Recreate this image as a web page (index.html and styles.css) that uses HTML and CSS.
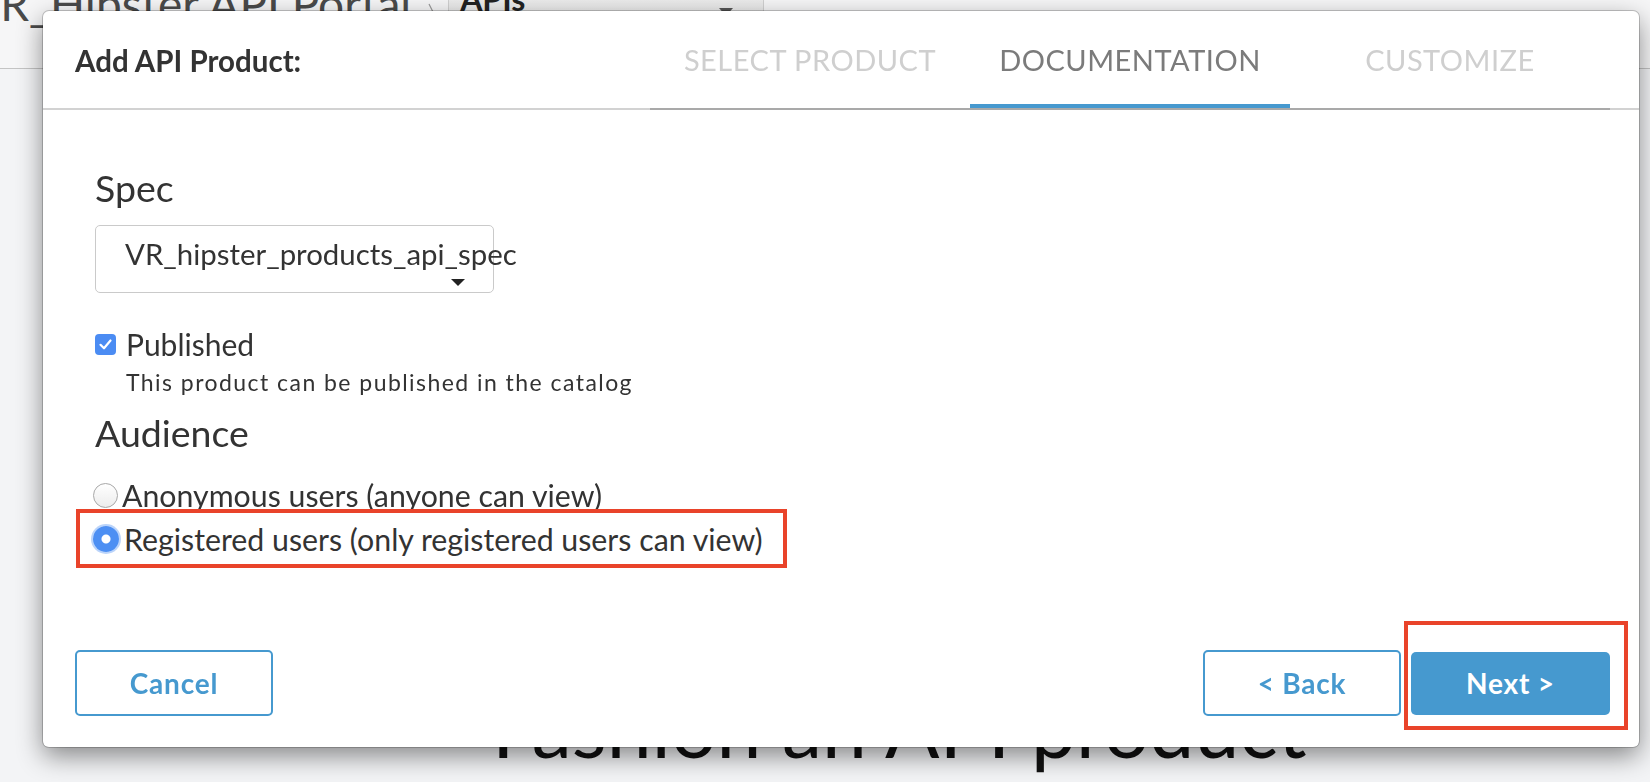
FILE: index.html
```html
<!DOCTYPE html>
<html lang="en">
<head>
<meta charset="utf-8">
<title>Add API Product</title>
<link rel="stylesheet" href="styles.css">
</head>
<body>
<div class="page">
  <header class="topbar">
    <div class="portal-title">VR_Hipster API Portal</div>
    <svg class="crumb-sep" width="14" height="44" viewBox="0 0 14 44"><path d="M2 2 L12 22 L2 42" fill="none" stroke="#9a9a9a" stroke-width="1.2"/></svg>
    <div class="crumb-select">
      <span class="crumb-label">APIs</span>
      <svg class="crumb-caret" width="14" height="8" viewBox="0 0 14 8"><path d="M0 0 H14 L7 8 Z" fill="#555"/></svg>
    </div>
  </header>
  <main class="page-main">
    <h1 class="page-heading">Fashion an API product</h1>
  </main>
</div>

<div class="modal">
  <div class="modal-header">
    <div class="modal-title">Add API Product:</div>
    <nav class="tabs">
      <div class="tab">SELECT PRODUCT</div>
      <div class="tab active">DOCUMENTATION</div>
      <div class="tab">CUSTOMIZE</div>
    </nav>
  </div>

  <div class="modal-body">
    <h2 class="section-title">Spec</h2>
    <div class="select">
      <span class="select-value">VR_hipster_products_api_spec</span>
      <svg class="select-caret" width="14" height="7" viewBox="0 0 14 7"><path d="M0 0 H14 L7 7 Z" fill="#222"/></svg>
    </div>

    <div class="check-row">
      <span class="checkbox"><svg width="21" height="21" viewBox="0 0 21 21"><path d="M5.5 10.8 L9 14.3 L15.5 6.5" fill="none" stroke="#fff" stroke-width="2.2" stroke-linecap="round" stroke-linejoin="round"/></svg></span>
      <span class="check-label">Published</span>
    </div>
    <p class="hint">This product can be published in the catalog</p>

    <h2 class="section-title audience">Audience</h2>
    <div class="radio-row">
      <span class="radio"></span>
      <span class="radio-label">Anonymous users (anyone can view)</span>
    </div>
    <div class="radio-row highlighted">
      <span class="radio checked"></span>
      <span class="radio-label">Registered users (only registered users can view)</span>
    </div>
  </div>

  <div class="modal-footer">
    <button class="btn btn-outline">Cancel</button>
    <div class="footer-right">
      <button class="btn btn-outline">&lt; Back</button>
      <div class="next-wrap">
        <button class="btn btn-primary">Next &gt;</button>
        <span class="annotation"></span>
      </div>
    </div>
  </div>
</div>
</body>
</html>
```

FILE: styles.css
```css
* { box-sizing: border-box; }

html, body {
  margin: 0;
  padding: 0;
  height: 100%;
  overflow: hidden;
}

body {
  font-family: Lato, "Open Sans", "Liberation Sans", sans-serif;
  color: #333;
  background: #f3f4f6;
}

/* ---------- background page ---------- */
.page {
  height: 100vh;
  display: flex;
  flex-direction: column;
}

.topbar {
  margin-top: -24px;
  height: 93px;
  flex: none;
  display: flex;
  align-items: flex-start;
  border-bottom: 1px solid #c4c4c4;
  background: #f6f6f7;
}

.portal-title {
  margin-left: -31px;
  font-size: 46px;
  line-height: 55px;
  color: #4a4a4a;
  white-space: nowrap;
}

.crumb-sep {
  margin: 26px 0 0 16px;
}

.crumb-select {
  margin-left: 7px;
  width: 316px;
  height: 64px;
  display: flex;
  justify-content: space-between;
  align-items: flex-start;
  padding: 4px 30px 0 11px;
  background: linear-gradient(#f2f2f2, #e2e2e2);
  border: 1px solid #d0d0d0;
  border-top: none;
}

.crumb-label {
  font-size: 32px;
  font-weight: 700;
  line-height: 38px;
  color: #222;
}

.crumb-caret {
  margin-top: 28px;
}

.page-main {
  padding: 610px 0 0 492px;
}

.page-heading {
  margin: 0;
  font-size: 80.5px;
  font-weight: 400;
  line-height: 96px;
  color: #111;
  white-space: nowrap;
}

/* ---------- modal ---------- */
.modal {
  position: fixed;
  top: 11px;
  left: 43px;
  width: 1596px;
  height: 736px;
  display: flex;
  flex-direction: column;
  background: #fff;
  border-radius: 6px;
  box-shadow: 0 0 0 1px rgba(0, 0, 0, 0.2), 0 9px 26px rgba(0, 0, 0, 0.45);
}

.modal-header {
  height: 99px;
  flex: none;
  display: flex;
  padding: 0 29px 0 32px;
  border-bottom: 2px solid #d2d2d2;
}

.modal-title {
  align-self: center;
  padding-top: 2px;
  font-size: 29.5px;
  font-weight: 700;
  color: #333;
  white-space: nowrap;
}

.tabs {
  margin-left: auto;
  margin-bottom: -2px;
  display: flex;
  border-bottom: 2px solid #a9a9a9;
}

.tab {
  width: 320px;
  display: flex;
  align-items: center;
  justify-content: center;
  font-size: 29px;
  letter-spacing: 0.5px;
  color: #cfcfcf;
  white-space: nowrap;
}

.tab.active {
  color: #7b7b7b;
  box-shadow: inset 0 -4px 0 #4699cf;
}

.modal-body {
  padding: 56px 52px 0;
}

.section-title {
  margin: 0;
  font-size: 37.5px;
  font-weight: 400;
  line-height: 44px;
  color: #333;
}

.select {
  position: relative;
  margin-top: 15px;
  width: 399px;
  height: 68px;
  padding: 11px 0 0 29px;
  border: 1px solid #cacaca;
  border-radius: 5px;
  font-size: 29.4px;
  line-height: 34px;
  white-space: nowrap;
}

.select-caret {
  position: absolute;
  right: 28px;
  bottom: 6px;
}

.check-row {
  margin-top: 34px;
  display: flex;
  align-items: center;
  gap: 10px;
  height: 34px;
  font-size: 30px;
}

.checkbox {
  width: 21px;
  height: 21px;
  border-radius: 4px;
  background: #4b8cf3;
  display: flex;
}

.hint {
  margin: 7px 0 0 31px;
  font-size: 23px;
  line-height: 28px;
  letter-spacing: 1.45px;
  color: #333;
}

.section-title.audience {
  margin-top: 15px;
}

.radio-row {
  margin-top: 23px;
  display: flex;
  align-items: center;
  height: 34px;
  font-size: 30.3px;
  white-space: nowrap;
}

.radio {
  flex: none;
  width: 25px;
  height: 25px;
  margin: 0 4px 0 -2px;
  border-radius: 50%;
  border: 1px solid #a8a8a8;
  background: linear-gradient(#ffffff, #ececec);
}

.radio-row.highlighted {
  position: relative;
  z-index: 1;
  margin: -3px 0 0 -19px;
  width: 711px;
  height: 59px;
  padding-left: 13px;
  border: 4px solid #e9432a;
  background: #fff;
}

.radio.checked {
  width: 26px;
  height: 26px;
  margin: 0 5px 0 0;
  border: none;
  background: radial-gradient(circle, #ffffff 0 4px, #4d8ff3 5px);
  box-shadow: 0 0 0 2px rgba(77, 143, 243, 0.38);
}

/* ---------- footer ---------- */
.modal-footer {
  margin-top: auto;
  display: flex;
  justify-content: space-between;
  align-items: center;
  padding: 0 29px 31px 32px;
}

.footer-right {
  display: flex;
  align-items: center;
  gap: 10px;
}

.btn {
  width: 198px;
  height: 66px;
  border-radius: 5px;
  font-family: Lato, "Open Sans", "Liberation Sans", sans-serif;
  font-size: 28px;
  font-weight: 700;
  letter-spacing: 0.8px;
  cursor: pointer;
}

.btn-outline {
  border: 2px solid #4699cf;
  background: #fff;
  color: #4699cf;
}

.next-wrap {
  position: relative;
  display: flex;
}

.btn-primary {
  width: 199px;
  height: 63px;
  border: none;
  background: #4699cf;
  color: #fff;
}

.annotation {
  position: absolute;
  left: -7px;
  top: -31px;
  right: -18px;
  bottom: -15px;
  border: 4px solid #e9432a;
  pointer-events: none;
}
```
